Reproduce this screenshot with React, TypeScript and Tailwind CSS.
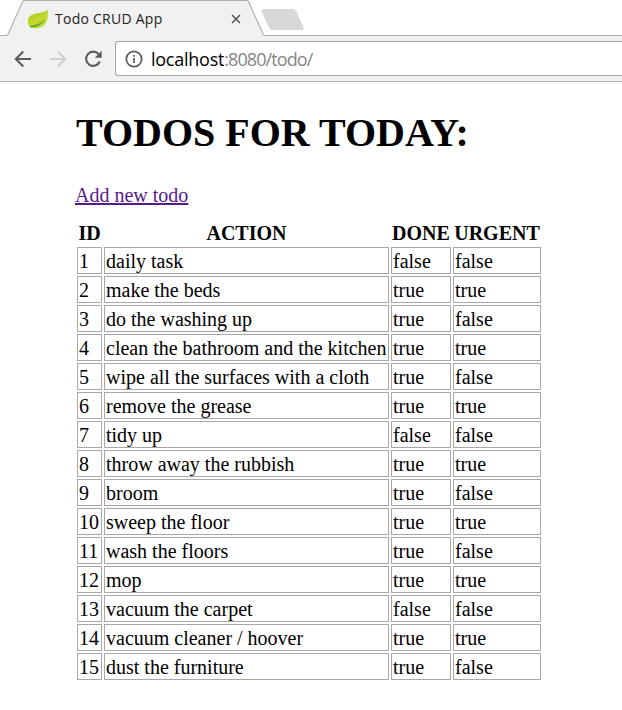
type Todo = { id: number; action: string; done: boolean; urgent: boolean };

const todos: Todo[] = [
  { id: 1, action: "daily task", done: false, urgent: false },
  { id: 2, action: "make the beds", done: true, urgent: true },
  { id: 3, action: "do the washing up", done: true, urgent: false },
  { id: 4, action: "clean the bathroom and the kitchen", done: true, urgent: true },
  { id: 5, action: "wipe all the surfaces with a cloth", done: true, urgent: false },
  { id: 6, action: "remove the grease", done: true, urgent: true },
  { id: 7, action: "tidy up", done: false, urgent: false },
  { id: 8, action: "throw away the rubbish", done: true, urgent: true },
  { id: 9, action: "broom", done: true, urgent: false },
  { id: 10, action: "sweep the floor", done: true, urgent: true },
  { id: 11, action: "wash the floors", done: true, urgent: false },
  { id: 12, action: "mop", done: true, urgent: true },
  { id: 13, action: "vacuum the carpet", done: false, urgent: false },
  { id: 14, action: "vacuum cleaner / hoover", done: true, urgent: true },
  { id: 15, action: "dust the furniture", done: true, urgent: false },
];

function LeafIcon() {
  return (
    <svg width="22" height="22" viewBox="0 0 22 22" className="shrink-0">
      <path d="M20.6 1.6C18.8 4.8 13.5 4.6 8.3 5.8C3.4 7 .8 9.8 1 13.3C1 15.6 1.8 18 3.4 19.6C7.4 21 13.6 20.8 17.3 17C21.6 12 21 6 20.6 1.6Z" fill="#c2d92c" />
      <path d="M20.6 1.6C18.8 4.8 13.5 4.6 8.3 5.8C3.4 7 .8 9.8 1 13.3C4 9.5 17 9.5 20.6 1.6Z" fill="#b4d02c" />
      <path d="M2.2 17.6C7.5 17.4 13.6 15.6 18.2 11.2C15.6 16 10.6 18.9 4.6 19.6C3.6 19.6 2.8 18.8 2.2 17.6Z" fill="#65a838" />
    </svg>
  );
}

function TabStrip() {
  return (
    <div className="relative flex h-9 items-center bg-white">
      <svg className="absolute left-0 top-0" width="622" height="36" viewBox="0 0 622 36">
        <path d="M0 35.5H6Q7.4 35.5 8 34.3L22.6 1.8Q23.2.5 24.5.5H246.5Q248 .5 248.6 1.8L263.2 34.3Q263.8 35.5 265.2 35.5H622V36H0Z" fill="#f1f1f1" />
        <path d="M0 35.5H6Q7.4 35.5 8 34.3L22.6 1.8Q23.2.5 24.5.5H246.5Q248 .5 248.6 1.8L263.2 34.3Q263.8 35.5 265.2 35.5H622" fill="none" stroke="#adadad" strokeWidth="1.1" />
        <path d="M263.5 9.5H293Q295 9.5 295.8 11.2L303 27.2Q304 29.5 301.7 29.5H272.5Q270.3 29.5 269.4 27.5L262 11.3Q261.2 9.5 263.5 9.5Z" fill="#d8d8d8" stroke="#cdcdcd" strokeWidth=".7" />
      </svg>
      <div className="relative flex h-9 w-full items-center pl-[27px] pt-px">
        <LeafIcon />
        <span className="ml-1.5 w-[175px] whitespace-nowrap font-['Open_Sans',sans-serif] text-[14px] leading-5 tracking-[0.25px] text-[#222]">Todo CRUD App</span>
        <svg width="12" height="12" viewBox="0 0 12 12">
          <path d="M2 2L10 10M10 2L2 10" stroke="#505050" strokeWidth="1.5" />
        </svg>
      </div>
    </div>
  );
}

function Toolbar() {
  return (
    <div className="flex h-[46px] items-start border-b border-[#b4b4b4] bg-[#f1f1f1] pl-3.5 pt-[5px]">
      <svg width="90" height="35" viewBox="14 41 90 35" className="shrink-0" fill="none">
        <path d="M31 59H16M23.3 51.5L15.8 59L23.3 66.5" stroke="#5a5a5a" strokeWidth="2" />
        <path d="M50 59H65M57.8 51.5L65.3 59L57.8 66.5" stroke="#d0d0d0" strokeWidth="2" />
        <path d="M98.7 54.2A7.1 7.1 0 1 0 99.8 61.5" stroke="#5a5a5a" strokeWidth="2.1" />
        <path d="M101.7 50.8V57.8H94.7Z" fill="#5a5a5a" />
      </svg>
      <div className="ml-[11px] flex h-[35px] min-w-0 flex-1 items-center rounded-l-[3px] border border-r-0 border-[#a6a6a6] bg-white pl-[9px]">
        <svg width="18" height="18" viewBox="0 0 18 18" fill="none">
          <circle cx="9" cy="9" r="7.7" stroke="#5a5a5a" strokeWidth="1.7" />
          <path d="M9 8V13" stroke="#5a5a5a" strokeWidth="1.7" />
          <path d="M9 5V6.7" stroke="#5a5a5a" strokeWidth="1.8" />
        </svg>
        <span className="ml-2 whitespace-nowrap font-['Open_Sans',sans-serif] text-[18px] leading-6 tracking-[-0.9px] text-[#858585]">
          <span className="tracking-[-0.25px] text-black">localhost</span>:8080/todo/
        </span>
      </div>
    </div>
  );
}

function Cell({ children }: { children: string | number }) {
  return <td className="h-[27px] whitespace-nowrap border border-[#a8a8a8] px-px pb-0 pt-0.5 leading-[23px]">{children}</td>;
}

function Heading({ children }: { children: string }) {
  return <th className="h-[27px] px-px pb-0 pt-[3px] text-center font-bold leading-6">{children}</th>;
}

export default function App() {
  return (
    <div className="h-[710px] w-[622px] overflow-hidden bg-white">
      <TabStrip />
      <Toolbar />
      <main className="pl-[75px] pt-7 font-['Liberation_Serif',serif] text-[20px] leading-[23px] text-black">
        <h1 className="whitespace-nowrap pl-px text-[40px] font-bold leading-[46px]">TODOS FOR TODAY:</h1>
        <p className="mt-7 h-8">
          <a href="#" className="text-[#551a8b] underline decoration-2 underline-offset-1">Add new todo</a>
        </p>
        <table className="w-[468px] table-fixed border-separate border-spacing-0.5">
          <colgroup>
            <col className="w-[25px]" />
            <col className="w-[285px]" />
            <col className="w-[60px]" />
            <col className="w-[88px]" />
          </colgroup>
          <thead>
            <tr>
              <Heading>ID</Heading>
              <Heading>ACTION</Heading>
              <Heading>DONE</Heading>
              <Heading>URGENT</Heading>
            </tr>
          </thead>
          <tbody>
            {todos.map((todo) => (
              <tr key={todo.id}>
                <Cell>{todo.id}</Cell>
                <Cell>{todo.action}</Cell>
                <Cell>{String(todo.done)}</Cell>
                <Cell>{String(todo.urgent)}</Cell>
              </tr>
            ))}
          </tbody>
        </table>
      </main>
    </div>
  );
}
